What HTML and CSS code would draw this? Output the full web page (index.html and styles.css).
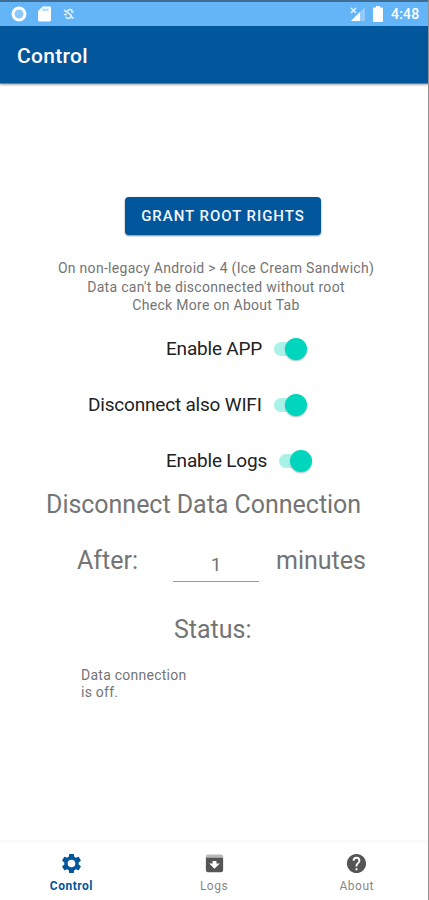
FILE: index.html
```
<!DOCTYPE html>
<html lang="en">
<head>
<meta charset="utf-8">
<title>Control</title>
<link rel="stylesheet" href="styles.css">
</head>
<body>
<div class="screen">
  <div class="status-bar">
    <svg class="ring" viewBox="0 0 16 16"><circle cx="8" cy="8" r="6" fill="#8fc9fb" stroke="#fff" stroke-width="3"/></svg>
    <svg class="card-icon" viewBox="0 0 14 16"><path d="M5 0h7.500Q14 0 14 1.500v13Q14 16 12.500 16h-11Q0 16 0 14.500V5z" fill="#fff"/><path d="M4.500 3.500h7" stroke="#b5dcfc" stroke-width="2.500"/></svg>
    <svg class="sync" viewBox="0 0 12 12" fill="none" stroke="#d9eeff" stroke-width="1.700"><path d="M1 2l3 2M9.500 2.500C7 .5 4 2 4.500 4.500L8 7c1 3-3 4.500-5.500 2M1 6.500h3M8 4h3M8.500 9l2 1.500"/></svg>
    <div class="spacer"></div>
    <svg class="signal" viewBox="0 0 15 14"><path d="M15 0v14H1z" fill="#94cafa"/><path d="M10 5v9H1z" fill="#fff"/><path d="M1 1l5 5M6 1L1 6" stroke="#e3f2ff" stroke-width="1.500"/></svg>
    <svg class="battery" viewBox="0 0 10 16"><path d="M3 0h4v1.500h2q1 0 1 1V15q0 1-1 1H1q-1 0-1-1V2.500q0-1 1-1h2z" fill="#fff"/></svg>
    <span class="clock">4:48</span>
  </div>
  <header class="app-bar"><h1>Control</h1></header>
  <main>
    <button class="root-button">GRANT ROOT RIGHTS</button>
    <p class="hint">On non-legacy Android &gt; 4 (Ice Cream Sandwich)<br>Data can't be disconnected without root<br>Check More on About Tab</p>
    <div class="switches">
      <div class="row app"><span>Enable APP</span><i class="switch"></i></div>
      <div class="row wifi"><span>Disconnect also WIFI</span><i class="switch"></i></div>
      <div class="row logs"><span>Enable Logs</span><i class="switch"></i></div>
    </div>
    <h2 class="heading">Disconnect Data Connection</h2>
    <div class="timer"><span class="after">After:</span><span class="value">1</span><span class="minutes">minutes</span></div>
    <h2 class="status-title">Status:</h2>
    <p class="status">Data connection<br>is off.</p>
  </main>
  <nav>
    <div class="tab active">
      <svg viewBox="0 0 24 24"><path fill-rule="evenodd" d="M19.430 12.980c.04-.32.070-.64.070-.98s-.03-.66-.07-.98l2.110-1.650c.19-.15.240-.42.120-.64l-2-3.460c-.12-.22-.39-.3-.61-.22l-2.490 1c-.52-.4-1.080-.73-1.690-.98l-.38-2.650C14.460 2.180 14.250 2 14 2h-4c-.25 0-.46.180-.49.420l-.38 2.650c-.61.250-1.170.590-1.690.98l-2.490-1c-.23-.09-.49 0-.61.220l-2 3.460c-.13.220-.07.490.120.640l2.110 1.650c-.04.320-.07.650-.07.980s.03.660.070.980l-2.110 1.650c-.19.150-.24.420-.12.640l2 3.460c.12.220.39.300.610.220l2.490-1c.52.400 1.080.730 1.690.980l.38 2.650c.03.240.240.420.490.420h4c.25 0 .46-.18.490-.42l.38-2.650c.61-.25 1.170-.59 1.690-.98l2.490 1c.23.090.490 0 .61-.22l2-3.460c.12-.22.070-.49-.12-.64zM12 16a4 4 0 1 1 0-8 4 4 0 0 1 0 8z"/></svg>
      <span>Control</span>
    </div>
    <div class="tab tab-logs">
      <svg viewBox="0 0 24 24"><path d="M5 2.500h14q2 0 2 2V7H3V4.500q0-2 2-2z" fill="#b9b9b9"/><path fill-rule="evenodd" d="M3 6h18v13c0 1.100-.9 2-2 2H5c-1.100 0-2-.9-2-2zM12 17.500l5.500-5.500H14V9.500h-4V12H6.500z"/></svg>
      <span>Logs</span>
    </div>
    <div class="tab">
      <svg viewBox="0 0 24 24"><path d="M12 2C6.480 2 2 6.480 2 12s4.480 10 10 10 10-4.480 10-10S17.520 2 12 2zm1 17h-2v-2h2zm2.070-7.750l-.9.920C13.450 12.900 13 13.500 13 15h-2v-.5c0-1.100.450-2.100 1.170-2.830l1.240-1.260c.37-.36.590-.86.590-1.410a2 2 0 0 0-4 0H8a4 4 0 0 1 8 0c0 .88-.36 1.680-.93 2.250z"/></svg>
      <span>About</span>
    </div>
  </nav>
</div>
</body>
</html>
```
FILE: styles.css
```
* { box-sizing: border-box; }
body { margin: 0; background: #fff; font-family: Roboto, sans-serif; color: #747474; }
h1, h2, p { margin: 0; font-weight: 400; }
.screen { width: 429px; height: 900px; display: flex; flex-direction: column; overflow: hidden; border-right: 1px solid #929292; }
.status-bar { height: 26px; flex: none; display: flex; align-items: center; padding: 0 8px 0 11px; background: #64b5f8; border-top: 2px solid #3f6d93; }
.ring { width: 16px; height: 16px; }
.card-icon { width: 13px; height: 16px; margin-left: 11px; }
.sync { width: 12px; height: 12px; margin-left: 12px; }
.spacer { flex: 1; }
.signal { width: 15px; height: 14px; }
.battery { width: 10px; height: 16px; margin: 0 8px; }
.clock { color: #fff; font-size: 14px; font-weight: 500; line-height: 20px; width: 29px; white-space: nowrap; letter-spacing: .2px; }
.app-bar { height: 58px; flex: none; padding: 15px 17px; background: #02569b; border-bottom: 1px solid #4e86b6; box-shadow: 0 1px 2px #aaa; }
h1 { color: #fff; font-size: 21px; line-height: 30px; font-weight: 500; letter-spacing: .3px; }
main { flex: 1; display: flex; flex-direction: column; padding-top: 113px; }
.root-button { width: 196px; height: 38px; flex: none; margin-left: 125px; padding: 0; border: 0; border-radius: 4px; background: #02569b; box-shadow: 0 1px 2px #888; color: #f2f7ff; font: 500 15px/38px Roboto, sans-serif; letter-spacing: .96px; white-space: nowrap; }
.hint { width: 340px; margin: 24px 0 0 46px; font-size: 14px; line-height: 18.500px; letter-spacing: .29px; text-align: center; white-space: nowrap; }
.switches { display: flex; flex-direction: column; margin-top: 6px; }
.row { height: 56px; display: flex; align-items: center; color: #222; font-size: 19px; letter-spacing: -.2px; white-space: nowrap; }
.app, .logs { padding-left: 166px; }
.wifi { padding-left: 88px; }
.row span { width: 96px; }
.wifi span { width: 174px; }
.logs span { width: 101px; }
.switch { width: 33px; height: 22px; margin-left: 12px; display: flex; justify-content: flex-end; }
.switch::before { content: ""; width: 25px; height: 14px; margin: 4px -14px 0 0; border-radius: 7px; background: #a9f2e7; }
.switch::after { content: ""; width: 22px; height: 22px; flex: none; border-radius: 50%; background: #00d5bd; box-shadow: 0 1px 2px #9cbcb8; }
.heading { margin: -1px 0 0 46px; font-size: 25px; line-height: 34px; letter-spacing: -.03px; white-space: nowrap; }
.timer { height: 50px; display: flex; margin: 17px 0 0 77px; font-size: 25px; line-height: 44px; }
.after { width: 96px; }
.value { width: 86px; height: 43px; border-bottom: 1px solid #999; text-align: center; font-size: 19px; line-height: 51px; margin-right: 17px; }
.status-title { margin: 24px 0 0 174px; font-size: 25px; line-height: 34px; }
.status { margin: 20px 0 0 81px; font-size: 14px; line-height: 17px; letter-spacing: .25px; }
nav { height: 60px; flex: none; display: grid; grid-template-columns: repeat(3, 142.700px); border-top: 3px solid #fafafa; }
.tab { display: flex; flex-direction: column; align-items: center; color: #888; font-size: 12px; }
.tab svg { width: 23px; height: 23px; margin-top: 9px; fill: #555; }
.tab span { line-height: 16px; margin-top: 3px; letter-spacing: .5px; }
.active { color: #02569b; font-weight: 700; }
.active svg { fill: #02569b; }
```
